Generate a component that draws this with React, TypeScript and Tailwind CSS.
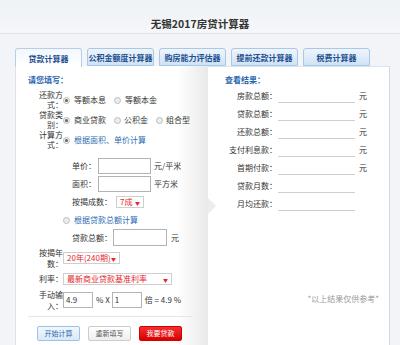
import React from "react";

const Radio = ({ checked }: { checked?: boolean }) => (
  <span className="w-[7px] h-[7px] rounded-full border border-[#bdbdbd] bg-[#ececec] flex items-center justify-center shrink-0">
    {checked && <span className="w-[3px] h-[3px] rounded-full bg-[#666]" />}
  </span>
);

const Select = ({ text, w }: { text: string; w: string }) => (
  <div className={`${w} h-[12px] border border-[#cfcfcf] bg-white flex items-center justify-between pl-[3px] pr-[3px] text-[#e3262b] whitespace-nowrap overflow-hidden`}>
    <span className="leading-[10px] whitespace-nowrap">{text}</span>
    <span className="text-[5px] leading-[5px] shrink-0">▼</span>
  </div>
);

const tabs = ["贷款计算器", "公积金额度计算器", "购房能力评估器", "提前还款计算器", "税费计算器"];

const results: [string, boolean][] = [
  ["房款总额：", true],
  ["贷款总额：", true],
  ["还款总额：", true],
  ["支付利息款：", true],
  ["首期付款：", true],
  ["贷款月数：", false],
  ["月均还款：", false],
];

export default function App() {
  return (
    <div className="w-[400px] h-[345px] overflow-hidden bg-[#f2f4f7] font-['Noto_Sans_CJK_SC',sans-serif] text-[8px] leading-[10px] text-[#333]">
      <div className="h-[34px] border-b border-[#dde4ec] flex justify-center pt-[17px] bg-[linear-gradient(#eef1f5,#f5f7fa)]">
        <h1 className="text-[10.5px] leading-[13px] font-bold text-[#333]">无锡2017房贷计算器</h1>
      </div>
      <div className="mt-[14px] pl-[15px] flex gap-[5px] relative z-10">
        {tabs.map((t, i) =>
          i === 0 ? (
            <div key={t} className="w-[67px] h-[19px] border border-b-0 border-[#b5cfe9] rounded-t-[3px] bg-[linear-gradient(#f3f8fd,#ffffff)] flex justify-center pt-[5px] font-bold text-[#1e4f8f]">
              {t}
            </div>
          ) : (
            <div key={t} className="w-[67px] h-[18px] border border-[#a9c8e8] rounded-t-[3px] bg-[linear-gradient(#eef5fc,#cfe3f6)] flex justify-center pt-[4px] font-bold text-[#1e4f8f]">
              {t}
            </div>
          )
        )}
      </div>
      <div className="flex -mt-[1px]">
        <div className="ml-[15px] w-[193px] h-[300px] border-l border-[#dde3ea] bg-[linear-gradient(to_right,#ffffff_84%,#e9e9e9)] pl-[12px] pr-[15px] pt-[9px]">
          <div className="font-bold text-[#2a66ad]">请您填写：</div>
          <div className="mt-[5px] flex items-center h-[20px] ml-[10px]">
            <div className="w-[25px] text-right leading-[10px]">还款方式：</div>
            <Radio checked />
            <span className="ml-[4px]">等额本息</span>
            <span className="ml-[8px]"><Radio /></span>
            <span className="ml-[4px]">等额本金</span>
          </div>
          <div className="flex items-center h-[20px] ml-[10px]">
            <div className="w-[25px] text-right leading-[10px]">贷款类别：</div>
            <Radio checked />
            <span className="ml-[4px]">商业贷款</span>
            <span className="ml-[8px]"><Radio /></span>
            <span className="ml-[3px]">公积金</span>
            <span className="ml-[8px]"><Radio /></span>
            <span className="ml-[3px]">组合型</span>
          </div>
          <div className="flex items-center h-[20px] ml-[10px]">
            <div className="w-[25px] text-right leading-[10px]">计算方式：</div>
            <Radio checked />
            <span className="ml-[4px] text-[#2f6db3]">根据面积、单价计算</span>
          </div>
          <div className="ml-[44px]">
            <div className="mt-[8px] flex items-center h-[16px]">
              <span className="w-[26px]">单价：</span>
              <div className="w-[53px] h-[16px] border border-[#b3b3b3] bg-white" />
              <span className="ml-[3px]">元/平米</span>
            </div>
            <div className="mt-[2px] flex items-center h-[16px]">
              <span className="w-[26px]">面积：</span>
              <div className="w-[53px] h-[16px] border border-[#b3b3b3] bg-white" />
              <span className="ml-[3px]">平方米</span>
            </div>
            <div className="mt-[3px] flex items-center h-[14px]">
              <span className="w-[44px]">按揭成数：</span>
              <Select text="7成" w="w-[28px]" />
            </div>
          </div>
          <div className="mt-[5px] ml-[35px] flex items-center h-[12px]">
            <Radio />
            <span className="ml-[4px] text-[#2f6db3]">根据贷款总额计算</span>
          </div>
          <div className="mt-[3px] ml-[44px] flex items-center h-[17px]">
            <span className="w-[41px]">贷款总额：</span>
            <div className="w-[54px] h-[17px] border border-[#b3b3b3] bg-white" />
            <span className="ml-[4px]">元</span>
          </div>
          <div className="mt-[1px] flex items-center h-[22px] ml-[10px]">
            <div className="w-[25px] text-right leading-[11px]">按揭年数：</div>
            <Select text="20年(240期)" w="w-[57px]" />
          </div>
          <div className="mt-[4px] flex items-center h-[12px] ml-[10px]">
            <div className="w-[25px] text-right">利率：</div>
            <Select text="最新商业贷款基准利率" w="w-[109px]" />
          </div>
          <div className="mt-[4px] flex items-center h-[22px] ml-[10px]">
            <div className="w-[25px] text-right leading-[11px]">手动输入：</div>
            <div className="w-[30px] h-[16px] border border-[#b3b3b3] bg-white pl-[2px] leading-[14px]">4.9</div>
            <span className="ml-[3px]">% X</span>
            <div className="ml-[2px] w-[30px] h-[16px] border border-[#b3b3b3] bg-white pl-[2px] leading-[14px]">1</div>
            <span className="ml-[3px]">倍 = 4.9 %</span>
          </div>
          <div className="mt-[5px] border-t border-[#e6e6e6]" />
          <div className="mt-[9px] ml-[9px] flex gap-[8px]">
            <button className="w-[43px] h-[15px] rounded-[2px] border border-[#9dc2e6] bg-[linear-gradient(#f1f7fd,#d9e9f8)] text-[#2a66ad] text-[7px] leading-[13px]">开始计算</button>
            <button className="w-[43px] h-[15px] rounded-[2px] border border-[#cccccc] bg-[linear-gradient(#ffffff,#eeeeee)] text-[#555] text-[7px] leading-[13px]">重新填写</button>
            <button className="w-[43px] h-[15px] rounded-[2px] border border-[#d40000] bg-[linear-gradient(#f23030,#d80000)] text-white text-[7px] leading-[13px]">我要贷款</button>
          </div>
        </div>
        <div className="relative w-[182px] h-[300px] bg-white border-t border-r border-t-[#dde4ec] border-r-[#c9dcef] pl-[17px] pt-[8px]">
          <svg className="absolute left-0 top-[131px]" width="9" height="16" viewBox="0 0 9 16">
            <polygon points="0,0 8,8 0,16" fill="#ececec" />
          </svg>
          <div className="font-bold text-[#2a66ad]">查看结果：</div>
          <div className="mt-[2px]">
            {results.map(([l, y]) => (
              <div key={l} className="flex items-center h-[18px]">
                <span className="w-[52px] text-right">{l}</span>
                <div className="ml-[1px] w-[77px] h-[13px] border-b border-[#cfcfcf]" />
                {y && <span className="ml-[4px]">元</span>}
              </div>
            ))}
          </div>
          <div className="mt-[81px] pr-[10px] text-right text-[#999]">*以上结果仅供参考*</div>
        </div>
      </div>
    </div>
  );
}
